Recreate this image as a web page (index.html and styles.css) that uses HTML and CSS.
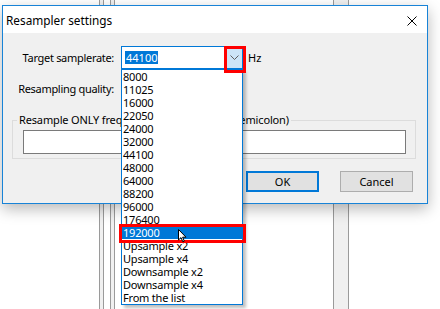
FILE: index.html
```html
<!DOCTYPE html>
<html lang="en">
<head>
    <meta charset="UTF-8">
    <meta name="viewport" content="width=device-width, initial-scale=1.0">
    <title>Resampler settings</title>
    <link rel="stylesheet" href="styles.css">
</head>
<body>
    <div class="backdrop">
        <div class="rail rail-left"><div class="rail-inner"></div></div>
        <div class="rail rail-right"></div>
    </div>

    <div class="dialog">
        <div class="titlebar">
            <span class="title">Resampler settings</span>
            <svg class="close" width="10" height="10" viewBox="0 0 10 10">
                <path d="M0.5 0.5 L9.5 9.5 M9.5 0.5 L0.5 9.5" stroke="#000" stroke-width="1"/>
            </svg>
        </div>
        <div class="content">
            <div class="form">
                <label class="label">Target samplerate:</label>
                <div class="combo open">
                    <span class="value"><span class="selected">44100</span></span>
                    <span class="arrow">
                        <svg width="9" height="5" viewBox="0 0 9 5">
                            <path d="M0.5 0.5 L4.5 4.5 L8.5 0.5" fill="none" stroke="#606060" stroke-width="1"/>
                        </svg>
                    </span>
                </div>
                <span class="unit">Hz</span>

                <label class="label">Resampling quality:</label>
                <div class="combo"></div>
                <span></span>
            </div>

            <fieldset class="group">
                <legend>Resample ONLY frequencies (separated by semicolon)</legend>
                <input class="textbox" type="text">
            </fieldset>

            <div class="buttons">
                <button class="btn default">OK</button>
                <button class="btn">Cancel</button>
            </div>
        </div>
    </div>

    <ul class="dropdown">
        <li>8000</li>
        <li>11025</li>
        <li>16000</li>
        <li>22050</li>
        <li>24000</li>
        <li>32000</li>
        <li>44100</li>
        <li>48000</li>
        <li>64000</li>
        <li>88200</li>
        <li>96000</li>
        <li>176400</li>
        <li class="hover">192000</li>
        <li>Upsample x2</li>
        <li>Upsample x4</li>
        <li>Downsample x2</li>
        <li>Downsample x4</li>
        <li>From the list</li>
    </ul>

    <div class="mark mark-arrow"></div>
    <div class="mark mark-item"></div>

    <svg class="cursor" width="9" height="14" viewBox="0 0 9 14">
        <path d="M0.5 0.5 L0.5 11 L3 8.6 L4.8 12.8 L6.3 12.1 L4.6 8.2 L8 8.2 Z" fill="#fff" stroke="#000" stroke-width="1" stroke-linejoin="round"/>
    </svg>
</body>
</html>
```

FILE: styles.css
```css
body{
    margin: 0;
    width: 440px;
    height: 309px;
    position: relative;
    overflow: hidden;
    background-color: #fff;
    font-family: 'Noto Sans', 'Liberation Sans', sans-serif;
    font-size: 11px;
    color: #000;
}

/* window behind the dialog */
.backdrop{
    display: flex;
    height: 309px;
    padding-left: 99px;
    box-sizing: border-box;
}
.rail{
    background-color: #f0f0f0;
    border-left: 1px solid #9a9a9a;
    border-right: 1px solid #9a9a9a;
    box-sizing: border-box;
}
.rail-left{
    width: 16px;
    padding-left: 3px;
}
.rail-inner{
    width: 6px;
    height: 100%;
    border-left: 1px solid #9a9a9a;
    border-right: 1px solid #9a9a9a;
    background-color: #fff;
}
.rail-right{
    width: 16px;
    margin-left: 218px;
}

.dialog{
    position: absolute;
    left: 2px;
    top: 5px;
    width: 426px;
    height: 199px;
    box-sizing: border-box;
    border: 1px solid #1883d7;
    background-color: #f0f0f0;
    box-shadow: 0 5px 14px rgba(0, 0, 0, 0.28);
    display: flex;
    flex-direction: column;
}
.titlebar{
    height: 27px;
    background-color: #fff;
    display: flex;
    align-items: center;
    justify-content: space-between;
    padding: 0 10px 0 3px;
}
.title{
    font-size: 11.8px;
    margin-top: 1px;
}
.close{
    margin-top: 2px;
}

.content{
    flex: 1;
    padding: 13px 14px 11px 0;
    display: flex;
    flex-direction: column;
}
.form{
    display: grid;
    grid-template-columns: 112px 122px auto;
    grid-template-rows: 23px 23px;
    column-gap: 6px;
    row-gap: 8px;
    align-items: center;
}
.label{
    text-align: right;
    letter-spacing: -0.3px;
    padding-right: 1px;
}
.combo{
    height: 23px;
    box-sizing: border-box;
    border: 1px solid #7a7a7a;
    background-color: #fff;
    display: flex;
}
.combo.open{
    border-color: #0078d7;
}
.value{
    flex: 1;
    display: flex;
    align-items: center;
    padding-left: 3px;
}
.selected{
    background-color: #0078d7;
    color: #fff;
    padding: 0 1px;
    line-height: 13px;
}
.arrow{
    width: 16px;
    background-color: #cce4f7;
    display: flex;
    align-items: center;
    justify-content: center;
}
.unit{
    margin-left: -1px;
}

.group{
    margin: 12px 0 0 9px;
    padding: 0 9px 4px 10px;
    border: 1px solid #dcdcdc;
    width: 404px;
    height: 47px;
    box-sizing: border-box;
}
.group legend{
    padding: 0 2px;
    margin-left: -6px;
    line-height: 16px;
    letter-spacing: -0.15px;
}
.textbox{
    display: block;
    margin: 2px 0 0 0;
    width: 100%;
    height: 24px;
    box-sizing: border-box;
    border: 1px solid #7a7a7a;
    background-color: #fff;
}

.buttons{
    display: flex;
    justify-content: flex-end;
    gap: 21px;
    margin-top: 12px;
}
.btn{
    width: 73px;
    height: 21px;
    box-sizing: border-box;
    border: 1px solid #adadad;
    background-color: #e1e1e1;
    font-family: inherit;
    font-size: 11px;
    color: #000;
    padding: 0;
}
.btn.default{
    border: 2px solid #0078d7;
}

/* open list of the samplerate combo */
.dropdown{
    position: absolute;
    left: 121px;
    top: 69px;
    width: 122px;
    margin: 0;
    padding: 0;
    list-style: none;
    box-sizing: border-box;
    border: 1px solid #0078d7;
    background-color: #fff;
    box-shadow: 3px 3px 3px rgba(0, 0, 0, 0.25);
}
.dropdown li{
    height: 13px;
    line-height: 13px;
    padding-left: 1px;
    white-space: nowrap;
    letter-spacing: -0.2px;
}
.dropdown li.hover{
    background-color: #0078d7;
    color: #fff;
}

/* red highlight marks drawn on the screenshot */
.mark{
    position: absolute;
    border: 3px solid #ff0000;
    box-sizing: border-box;
}
.mark-arrow{
    left: 224px;
    top: 46px;
    width: 22px;
    height: 27px;
}
.mark-item{
    left: 119px;
    top: 224px;
    width: 127px;
    height: 19px;
}

.cursor{
    position: absolute;
    left: 178px;
    top: 229px;
}
```
